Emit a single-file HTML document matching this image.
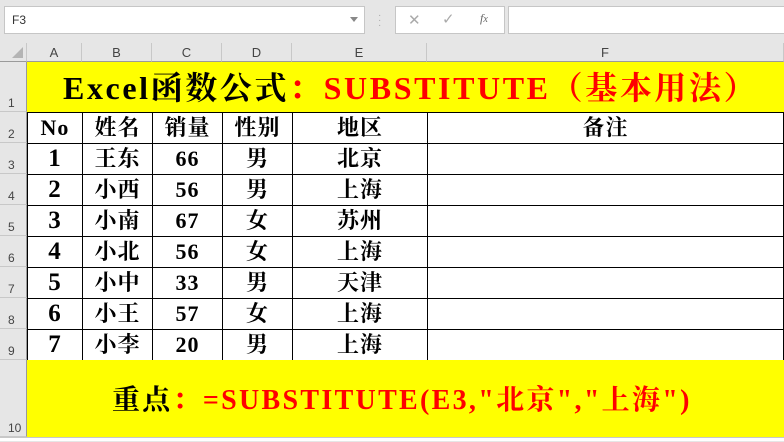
<!DOCTYPE html>
<html><head><meta charset="utf-8"><style>
*{margin:0;padding:0;box-sizing:border-box}
body{width:784px;height:441px;background:#e6e6e6;position:relative;overflow:hidden;font-family:"Liberation Serif","Noto Serif CJK SC",serif}
.abs{position:absolute}
.nb{left:4px;top:6px;width:361px;height:28px;background:#fff;border:1px solid #c6c6c6;font:12px "Liberation Sans",sans-serif;color:#333;padding:6px 0 0 7px}
.fx{left:395px;top:6px;width:110px;height:28px;background:#fff;border:1px solid #c6c6c6}
.fb{left:508px;top:6px;width:280px;height:28px;background:#fff;border:1px solid #c6c6c6}
.ch{top:43px;height:19px;font:13px "Liberation Sans",sans-serif;color:#444;text-align:center;line-height:20px;border-right:1px solid #c8c8c8;border-bottom:1px solid #9a9a9a}
.rh{left:0;width:27px;font:12px "Liberation Sans",sans-serif;color:#444;border-right:1px solid #9a9a9a;border-bottom:1px solid #c8c8c8;display:flex;align-items:flex-end;padding:0 0 1px 8px}
table{position:absolute;left:27px;top:112px;border-collapse:collapse;background:#fff}
td{border:1px solid #000;height:31px;text-align:center;font-weight:bold;font-size:22px;padding:0;line-height:28px;letter-spacing:1px}
td.n{font-size:25px}
.y{background:#ff0;left:27px;width:757px}
</style></head><body>
<div class="abs nb">F3<span style="position:absolute;right:6px;top:10px;border:4px solid transparent;border-top:5px solid #888"></span></div>
<div class="abs" style="left:378px;top:13px;color:#aaa;font:10px sans-serif;line-height:5px">·<br>·<br>·</div>
<div class="abs fx"><span class="abs" style="left:12px;top:4px;color:#aaa;font:15px 'Liberation Sans'">✕</span><span class="abs" style="left:46px;top:3px;color:#aaa;font:15px 'Liberation Sans'">✓</span><span class="abs" style="left:84px;top:4px;color:#666;font:italic 12px 'Liberation Serif'">f<small>x</small></span></div>
<div class="abs fb"></div>
<div class="abs" style="left:0;top:43px;width:27px;height:19px;border-right:1px solid #c8c8c8;border-bottom:1px solid #9a9a9a"><span class="abs" style="right:3px;bottom:3px;border-left:11px solid transparent;border-bottom:11px solid #b4b4b4"></span></div>
<div class="abs ch" style="left:27px;width:55px">A</div>
<div class="abs ch" style="left:82px;width:70px">B</div>
<div class="abs ch" style="left:152px;width:70px">C</div>
<div class="abs ch" style="left:222px;width:70px">D</div>
<div class="abs ch" style="left:292px;width:135px">E</div>
<div class="abs ch" style="left:427px;width:357px">F</div>
<div class="abs rh" style="top:62px;height:50px">1</div>
<div class="abs rh" style="top:112px;height:31px">2</div>
<div class="abs rh" style="top:143px;height:31px">3</div>
<div class="abs rh" style="top:174px;height:31px">4</div>
<div class="abs rh" style="top:205px;height:31px">5</div>
<div class="abs rh" style="top:236px;height:31px">6</div>
<div class="abs rh" style="top:267px;height:31px">7</div>
<div class="abs rh" style="top:298px;height:31px">8</div>
<div class="abs rh" style="top:329px;height:31px">9</div>
<div class="abs rh" style="top:360px;height:77px">10</div>
<div class="abs y" style="top:62px;height:50px;font-weight:bold;font-size:32px;line-height:52px;padding-left:36px;white-space:nowrap;letter-spacing:2.6px">Excel函数公式<span style="color:#f00">：SUBSTITUTE（基本用法）</span></div>
<table>
<tr><td style="width:55px">No</td><td style="width:70px">姓名</td><td style="width:70px">销量</td><td style="width:70px">性别</td><td style="width:135px">地区</td><td style="width:356px">备注</td></tr>
<tr><td class="n">1</td><td>王东</td><td>66</td><td>男</td><td>北京</td><td></td></tr>
<tr><td class="n">2</td><td>小西</td><td>56</td><td>男</td><td>上海</td><td></td></tr>
<tr><td class="n">3</td><td>小南</td><td>67</td><td>女</td><td>苏州</td><td></td></tr>
<tr><td class="n">4</td><td>小北</td><td>56</td><td>女</td><td>上海</td><td></td></tr>
<tr><td class="n">5</td><td>小中</td><td>33</td><td>男</td><td>天津</td><td></td></tr>
<tr><td class="n">6</td><td>小王</td><td>57</td><td>女</td><td>上海</td><td></td></tr>
<tr><td class="n">7</td><td>小李</td><td>20</td><td>男</td><td>上海</td><td></td></tr>
</table>
<div class="abs y" style="top:360px;height:77px;font-weight:bold;font-size:28px;line-height:82px;padding-left:85px;white-space:nowrap;letter-spacing:2.3px">重点<span style="color:#f00">：=SUBSTITUTE(E3,"北京","上海")</span></div>
<div class="abs" style="left:0;top:437px;width:784px;height:4px;background:#fff;border-top:1px solid #c8c8c8"></div>
</body></html>
